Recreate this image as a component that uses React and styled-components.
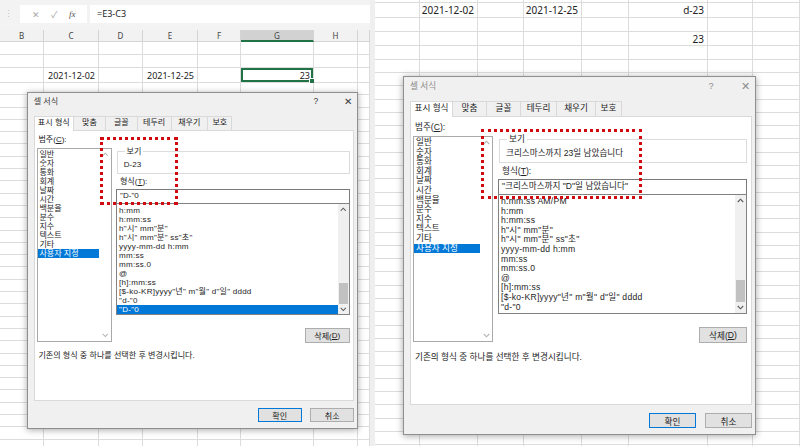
import React from 'react';
import styled, { createGlobalStyle } from 'styled-components';

const GlobalStyle = createGlobalStyle`
  html, body {
    margin: 0;
    padding: 0;
    background: #fff;
  }
  body {
    font-family: 'Noto Sans', 'Noto Sans CJK KR', sans-serif;
    color: #222;
  }
`;

const Page = styled.div`
  display: flex;
  width: 800px;
  height: 446px;
  overflow: hidden;
`;

const Panel = styled.div`
  position: relative;
  width: ${props => props.$width}px;
  height: 446px;
  overflow: hidden;
  display: flex;
  flex-direction: column;
  background: #fff;
`;

const Divider = styled.div`
  width: 5px;
  background: #efefef;
`;

/* ---------- formula bar ---------- */

const FormulaBar = styled.div`
  height: 30px;
  flex-shrink: 0;
  box-sizing: border-box;
  padding-top: 5px;
  display: flex;
  align-items: flex-start;
  gap: 3px;
  background: #f3f3f3;
`;

const Grip = styled.div`
  width: 17px;
  line-height: 18px;
  text-align: center;
  font-size: 9px;
  color: #c4c4c4;
`;

const FxBox = styled.div`
  width: 67px;
  height: 18px;
  display: flex;
  align-items: center;
  justify-content: space-evenly;
  background: #fff;
  font-size: 9px;
  color: #a8a8a8;
`;

const Fx = styled.span`
  font-family: 'Liberation Serif', serif;
  font-style: italic;
  color: #555;
`;

const FormulaInput = styled.div`
  flex: 1;
  height: 18px;
  padding-left: 7px;
  line-height: 18px;
  background: #fff;
  font-size: 9px;
  color: #222;
`;

/* ---------- sheet grid ---------- */

const SheetGrid = styled.div`
  display: grid;
  grid-template-columns: ${props => props.$cols};
  grid-template-rows: ${props => props.$rows};
  font-size: ${props => props.$font}px;
`;

const HeaderCell = styled.div`
  box-sizing: border-box;
  border-right: 1px solid #d4d4d4;
  border-bottom: ${props => (props.$active ? '2px solid #217346' : '1px solid #d4d4d4')};
  background: ${props => (props.$active ? '#d2d2d2' : '#f2f2f2')};
  display: flex;
  align-items: center;
  justify-content: center;
  font-size: 8px;
  color: #444;
`;

const Cell = styled.div`
  position: relative;
  box-sizing: border-box;
  border-right: 1px solid #dcdcdc;
  border-bottom: 1px solid #dcdcdc;
  display: flex;
  align-items: center;
  justify-content: flex-end;
  padding: 0 3px;
  white-space: nowrap;
  color: #222;
  ${props => props.$selected && 'box-shadow: inset 0 0 0 2px #217346;'}
`;

const FillHandle = styled.span`
  position: absolute;
  right: -2px;
  bottom: -2px;
  width: 4px;
  height: 4px;
  background: #217346;
  border: 1px solid #fff;
`;

const Sheet = ({ cols, rows, font, headers, activeHeader, data, selected }) => (
  <SheetGrid
    $cols={cols.map(c => `${c}px`).join(' ')}
    $rows={rows.map(r => `${r}px`).join(' ')}
    $font={font}
  >
    {headers &&
      headers.map((h, i) => (
        <HeaderCell key={`h${i}`} $active={i === activeHeader}>
          {h}
        </HeaderCell>
      ))}
    {rows.slice(headers ? 1 : 0).map((_, r) =>
      cols.map((__, c) => {
        const key = `${r}-${c}`;
        const isSel = selected === key;
        return (
          <Cell key={key} $selected={isSel}>
            {data[key]}
            {isSel && <FillHandle />}
          </Cell>
        );
      })
    )}
  </SheetGrid>
);

/* ---------- format cells dialog ---------- */

const DialogSpot = styled.div`
  position: absolute;
  left: ${props => props.$left}px;
  top: ${props => props.$top}px;
`;

const DialogBox = styled.div`
  zoom: ${props => props.$zoom};
  width: 353px;
  height: 359px;
  box-sizing: border-box;
  border: 1px solid #8f8f8f;
  background: #f0f0f0;
  box-shadow: 0 1px 7px rgba(0, 0, 0, 0.35);
  display: flex;
  flex-direction: column;
  font-family: 'Liberation Sans', 'Noto Sans CJK KR', sans-serif;
  font-size: 8.6px;
  overflow: hidden;
`;

const TitleBar = styled.div`
  height: 24px;
  flex-shrink: 0;
  box-sizing: border-box;
  padding: 3px 0 0 6px;
  display: flex;
  align-items: flex-start;
  line-height: 12px;
  color: ${props => (props.$inactive ? '#8c8c8c' : '#3a3a3a')};
`;

const Title = styled.span`
  flex: 1;
`;

const TitleButton = styled.span`
  width: 20px;
  text-align: center;
  font-size: ${props => props.$size}px;
  margin-right: ${props => props.$gap || 0}px;
`;

const TabRow = styled.div`
  display: flex;
  align-items: flex-start;
  height: 15px;
  padding-left: 6px;
  position: relative;
  z-index: 1;
`;

const Tab = styled.div`
  width: ${props => props.$w}px;
  height: ${props => (props.$active ? 16 : 15)}px;
  box-sizing: border-box;
  margin-right: -1px;
  border: 1px solid #d9d9d9;
  border-bottom: none;
  background: ${props => (props.$active ? '#fff' : '#f0f0f0')};
  text-align: center;
  line-height: 13px;
  color: #222;
`;

const TabPanel = styled.div`
  width: 342px;
  height: 289px;
  margin-left: 6px;
  flex-shrink: 0;
  box-sizing: border-box;
  border: 1px solid #d9d9d9;
  background: #fff;
  padding: 2px 0 0 2px;
  display: grid;
  grid-template-columns: 80px 249px;
  column-gap: 5px;
  align-content: start;
`;

const Column = styled.div`
  display: flex;
  flex-direction: column;
`;

const FieldLabel = styled.div`
  height: ${props => props.$h}px;
  line-height: 16px;
  padding-left: ${props => props.$pad}px;
  color: #222;
  u {
    text-decoration: underline;
  }
`;

const ListBox = styled.div`
  height: ${props => props.$h}px;
  box-sizing: border-box;
  border: 1px solid ${props => props.$border};
  display: flex;
  overflow: hidden;
`;

const Items = styled.div`
  flex: 1;
  padding-top: ${props => props.$top}px;
  letter-spacing: ${props => props.$spacing || 0}px;
  overflow: hidden;
`;

const Item = styled.div`
  height: 9.6px;
  line-height: 9.6px;
  padding-left: 2px;
  white-space: nowrap;
  background: ${props => (props.$selected ? '#0078d7' : 'transparent')};
  color: ${props => (props.$selected ? '#fff' : '#1e1e1e')};
`;

const ScrollBar = styled.div`
  width: ${props => props.$w}px;
  display: flex;
  flex-direction: column;
  align-items: center;
  background: ${props => props.$bg};
`;

const Arrow = styled.div`
  height: 11px;
  display: flex;
  align-items: center;
  justify-content: center;
`;

const Track = styled.div`
  flex: 1;
  align-self: stretch;
  padding-top: ${props => props.$offset}px;
  display: flex;
  justify-content: center;
`;

const Thumb = styled.div`
  width: 9px;
  height: 22px;
  background: #c1c1c1;
`;

const Chevron = ({ down, color }) => (
  <svg width="7" height="5" viewBox="0 0 7 5">
    <polyline
      points={down ? '0.8,1 3.5,3.8 6.2,1' : '0.8,4 3.5,1.2 6.2,4'}
      fill="none"
      stroke={color}
      strokeWidth="1.1"
    />
  </svg>
);

const SampleGroup = styled.fieldset`
  margin: 15px 0 0 1px;
  padding: 0 6px;
  width: 248px;
  box-sizing: border-box;
  border: 1px solid #dcdcdc;
  min-width: 0;
`;

const Legend = styled.legend`
  padding: 0 2px;
  margin-left: 1px;
  line-height: 10px;
  color: #222;
`;

const SampleText = styled.div`
  padding: 2px 0;
  line-height: 14px;
  white-space: nowrap;
  color: #222;
`;

const CodeInput = styled.div`
  height: 15px;
  box-sizing: border-box;
  border: 1px solid #7a7a7a;
  border-bottom: none;
  padding-left: 3px;
  line-height: 13px;
  white-space: nowrap;
  color: #222;
`;

const ButtonRow = styled.div`
  display: flex;
  justify-content: flex-end;
  margin-top: 13px;
`;

const Button = styled.div`
  width: ${props => props.$w}px;
  height: ${props => props.$h}px;
  box-sizing: border-box;
  border: 1px solid ${props => (props.$primary ? '#0078d7' : '#adadad')};
  background: #e1e1e1;
  display: flex;
  align-items: center;
  justify-content: center;
  color: #222;
  u {
    text-decoration: underline;
  }
`;

const Description = styled.div`
  grid-column: 1 / -1;
  margin-top: 6px;
  padding-left: 2px;
  line-height: 16px;
  white-space: nowrap;
  color: #222;
`;

const Footer = styled.div`
  display: flex;
  justify-content: flex-end;
  gap: 9px;
  padding: 8px 3px 0 0;
`;

const Marker = styled.div`
  position: absolute;
  left: ${props => props.$x}px;
  top: ${props => props.$y}px;
  width: ${props => props.$w}px;
  height: ${props => props.$h}px;
  box-sizing: border-box;
  border: 3px dotted #d10a10;
`;

const tabs = [
  ['표시 형식', 43],
  ['맞춤', 35],
  ['글꼴', 35],
  ['테두리', 37],
  ['채우기', 40],
  ['보호', 27],
];

const categories = [
  '일반', '숫자', '통화', '회계', '날짜', '시간',
  '백분율', '분수', '지수', '텍스트', '기타', '사용자 지정',
];

const baseFormats = [
  'h:mm',
  'h:mm:ss',
  'h"시" mm"분"',
  'h"시" mm"분" ss"초"',
  'yyyy-mm-dd h:mm',
  'mm:ss',
  'mm:ss.0',
  '@',
  '[h]:mm:ss',
  '[$-ko-KR]yyyy"년" m"월" d"일" dddd',
  '"d-"0',
];

const FormatCells = ({ left, top, zoom, inactive, sample, code, formats, selectedFormat }) => (
  <DialogSpot $left={left} $top={top}>
    <DialogBox $zoom={zoom}>
      <TitleBar $inactive={inactive}>
        <Title>셀 서식</Title>
        <TitleButton $size={9} $gap={14}>?</TitleButton>
        <TitleButton $size={11}>✕</TitleButton>
      </TitleBar>
      <TabRow>
        {tabs.map(([name, w], i) => (
          <Tab key={name} $w={w} $active={i === 0}>
            {name}
          </Tab>
        ))}
      </TabRow>
      <TabPanel>
        <Column>
          <FieldLabel $h={17} $pad={2}>
            범주(<u>C</u>):
          </FieldLabel>
          <ListBox $h={206} $border="#a9a9a9">
            <Items $top={1}>
              {categories.map((c, i) => (
                <Item key={c} $selected={i === categories.length - 1}>
                  {c}
                </Item>
              ))}
            </Items>
            <ScrollBar $w={12} $bg="#fff">
              <Arrow>
                <Chevron color="#b4b4b4" />
              </Arrow>
              <Track $offset={0} />
              <Arrow>
                <Chevron down color="#b4b4b4" />
              </Arrow>
            </ScrollBar>
          </ListBox>
        </Column>
        <Column>
          <SampleGroup>
            <Legend>보기</Legend>
            <SampleText>{sample}</SampleText>
          </SampleGroup>
          <FieldLabel $h={16} $pad={4}>
            형식(<u>T</u>):
          </FieldLabel>
          <CodeInput>{code}</CodeInput>
          <ListBox $h={120} $border="#828282">
            <Items $top={2} $spacing={0.25}>
              {formats.map((f, i) => (
                <Item key={f} $selected={i === selectedFormat}>
                  {f}
                </Item>
              ))}
            </Items>
            <ScrollBar $w={11} $bg="#f0f0f0">
              <Arrow>
                <Chevron color="#5a5a5a" />
              </Arrow>
              <Track $offset={74}>
                <Thumb />
              </Track>
              <Arrow>
                <Chevron down color="#5a5a5a" />
              </Arrow>
            </ScrollBar>
          </ListBox>
          <ButtonRow>
            <Button $w={48} $h={16}>
              삭제(<u>D</u>)
            </Button>
          </ButtonRow>
        </Column>
        <Description>기존의 형식 중 하나를 선택한 후 변경시킵니다.</Description>
      </TabPanel>
      <Footer>
        <Button $w={47} $h={15} $primary>
          확인
        </Button>
        <Button $w={47} $h={15}>
          취소
        </Button>
      </Footer>
    </DialogBox>
  </DialogSpot>
);

const leftRows = [12, 13, 13, 15, ...Array(30).fill(12.3)];
const rightRows = [3, 15, 14, 14, 14, 13, ...Array(29).fill(13.3)];

const App = () => (
  <Page>
    <GlobalStyle />
    <Panel $width={370}>
      <FormulaBar>
        <Grip>⋮</Grip>
        <FxBox>
          <span>✕</span>
          <span>✓</span>
          <Fx>fx</Fx>
        </FxBox>
        <FormulaInput>=E3-C3</FormulaInput>
      </FormulaBar>
      <Sheet
        cols={[44, 55, 44, 55, 43, 73, 44, 12]}
        rows={leftRows}
        font={9}
        headers={['B', 'C', 'D', 'E', 'F', 'G', 'H', '']}
        activeHeader={5}
        selected="2-5"
        data={{ '2-1': '2021-12-02', '2-3': '2021-12-25', '2-5': '23' }}
      />
      <FormatCells
        left={27}
        top={92}
        zoom={0.938}
        sample="D-23"
        code={'"D-"0'}
        formats={[...baseFormats, '"D-"0']}
        selectedFormat={11}
      />
      <Marker $x={100} $y={137} $w={78} $h={68} />
    </Panel>
    <Divider />
    <Panel $width={425}>
      <Sheet
        cols={[45, 58, 46, 58, 47, 79, 45, 47]}
        rows={rightRows}
        font={10}
        data={{
          '1-1': '2021-12-02',
          '1-3': '2021-12-25',
          '1-5': 'd-23',
          '3-5': '23',
        }}
      />
      <FormatCells
        left={28}
        top={76}
        zoom={1}
        inactive
        sample="크리스마스까지 23일 남았습니다"
        code={'"크리스마스까지 "D"일 남았습니다"'}
        formats={['h:mm:ss AM/PM', ...baseFormats]}
        selectedFormat={-1}
      />
      <Marker $x={106} $y={129} $w={161} $h={70} />
    </Panel>
  </Page>
);

export default App;
